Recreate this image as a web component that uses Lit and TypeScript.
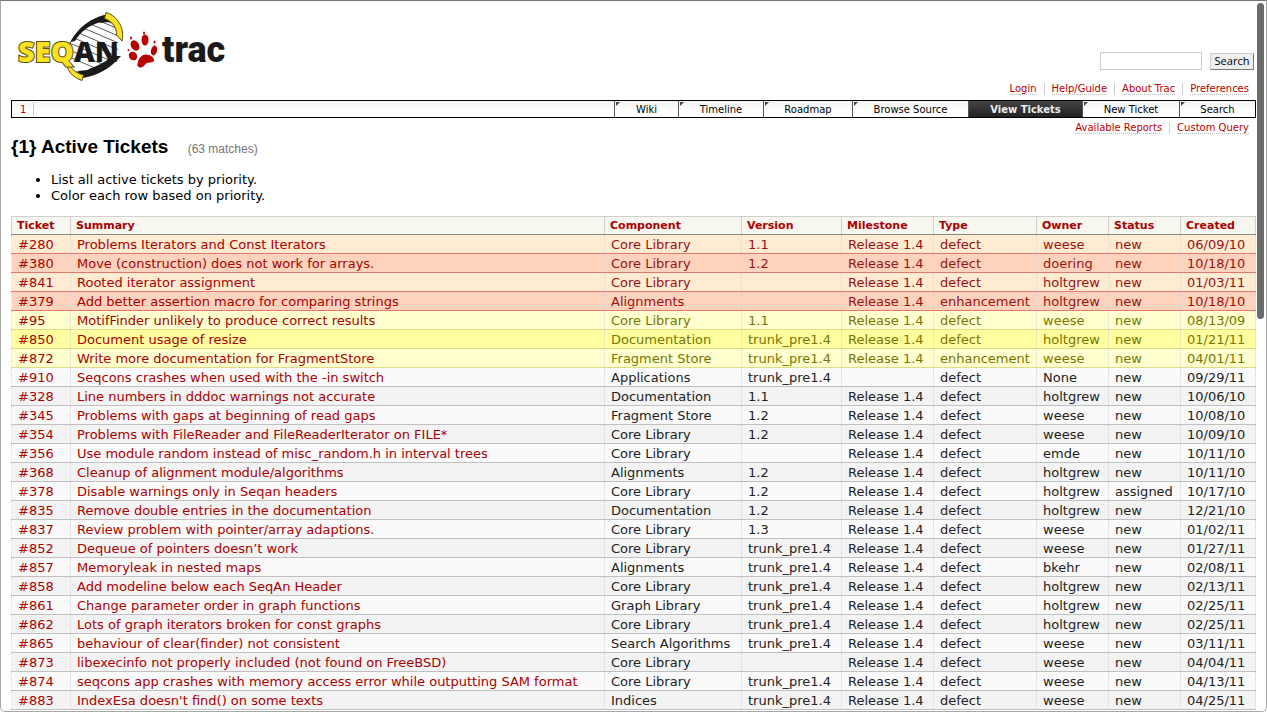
import { LitElement, html, css, svg } from "lit";
import { customElement } from "lit/decorators.js";

type Ticket = [number, string, string, string, string, string, string, string, string, string];

const R = "Release 1.4";
const T = "trunk_pre1.4";
const tickets: Ticket[] = [
  [280, "Problems Iterators and Const Iterators", "Core Library", "1.1", R, "defect", "weese", "new", "06/09/10", "p2"],
  [380, "Move (construction) does not work for arrays.", "Core Library", "1.2", R, "defect", "doering", "new", "10/18/10", "p2"],
  [841, "Rooted iterator assignment", "Core Library", "", R, "defect", "holtgrew", "new", "01/03/11", "p2"],
  [379, "Add better assertion macro for comparing strings", "Alignments", "", R, "enhancement", "holtgrew", "new", "10/18/10", "p2"],
  [95, "MotifFinder unlikely to produce correct results", "Core Library", "1.1", R, "defect", "weese", "new", "08/13/09", "p3"],
  [850, "Document usage of resize", "Documentation", T, R, "defect", "holtgrew", "new", "01/21/11", "p3"],
  [872, "Write more documentation for FragmentStore", "Fragment Store", T, R, "enhancement", "weese", "new", "04/01/11", "p3"],
  [910, "Seqcons crashes when used with the -in switch", "Applications", T, "", "defect", "None", "new", "09/29/11", "p4"],
  [328, "Line numbers in dddoc warnings not accurate", "Documentation", "1.1", R, "defect", "holtgrew", "new", "10/06/10", "p4"],
  [345, "Problems with gaps at beginning of read gaps", "Fragment Store", "1.2", R, "defect", "weese", "new", "10/08/10", "p4"],
  [354, "Problems with FileReader and FileReaderIterator on FILE*", "Core Library", "1.2", R, "defect", "weese", "new", "10/09/10", "p4"],
  [356, "Use module random instead of misc_random.h in interval trees", "Core Library", "", R, "defect", "emde", "new", "10/11/10", "p4"],
  [368, "Cleanup of alignment module/algorithms", "Alignments", "1.2", R, "defect", "holtgrew", "new", "10/11/10", "p4"],
  [378, "Disable warnings only in Seqan headers", "Core Library", "1.2", R, "defect", "holtgrew", "assigned", "10/17/10", "p4"],
  [835, "Remove double entries in the documentation", "Documentation", "1.2", R, "defect", "holtgrew", "new", "12/21/10", "p4"],
  [837, "Review problem with pointer/array adaptions.", "Core Library", "1.3", R, "defect", "weese", "new", "01/02/11", "p4"],
  [852, "Dequeue of pointers doesn’t work", "Core Library", T, R, "defect", "weese", "new", "01/27/11", "p4"],
  [857, "Memoryleak in nested maps", "Alignments", T, R, "defect", "bkehr", "new", "02/08/11", "p4"],
  [858, "Add modeline below each SeqAn Header", "Core Library", T, R, "defect", "holtgrew", "new", "02/13/11", "p4"],
  [861, "Change parameter order in graph functions", "Graph Library", T, R, "defect", "holtgrew", "new", "02/25/11", "p4"],
  [862, "Lots of graph iterators broken for const graphs", "Core Library", T, R, "defect", "holtgrew", "new", "02/25/11", "p4"],
  [865, "behaviour of clear(finder) not consistent", "Search Algorithms", T, R, "defect", "weese", "new", "03/11/11", "p4"],
  [873, "libexecinfo not properly included (not found on FreeBSD)", "Core Library", "", R, "defect", "weese", "new", "04/04/11", "p4"],
  [874, "seqcons app crashes with memory access error while outputting SAM format", "Core Library", T, R, "defect", "weese", "new", "04/13/11", "p4"],
  [883, "IndexEsa doesn't find() on some texts", "Indices", T, R, "defect", "weese", "new", "04/25/11", "p4"],
];

const columns = ["Ticket", "Summary", "Component", "Version", "Milestone", "Type", "Owner", "Status", "Created"];
const tabs = ["Wiki", "Timeline", "Roadmap", "Browse Source", "View Tickets", "New Ticket", "Search"];

const logo = svg`
  <clipPath id="helix"><path d="M67 62 C66 50 70 38 82 28 C92 20 100 17 108 18 C118 26 120 42 117 55 C108 66 98 72 85 76 C76 74 68 70 67 62Z"/></clipPath>
  <path d="M67 62 C66 50 70 38 82 28" fill="none" stroke="#444" stroke-width="1"/>
  <g clip-path="url(#helix)" stroke="#333" stroke-width="0.800" fill="none">
    <path d="M60 4l70 30M60 11l70 30M60 18l70 30M60 25l70 30M60 32l70 30M60 39l70 30M60 46l70 30M60 53l70 30"/>
  </g>
  <path d="M71 42 C77 28 92 17 107 14.500 L114 24 C106 20 104 24 99 22.500 C90 25 80 32 75 41Z" fill="#1a1a1a"/>
  <path d="M76 72 C82 69 86 72 90 68.500 C100 65 107 61 112 56 L121 56 C110 69 98 75 83 78Z" fill="#1a1a1a"/>
  <path d="M106 12.500 C118 16 125 29 122 41 L116.500 35 C117 28 112 21 104.500 18.500Z" fill="#fbe122" stroke="#554c12" stroke-width="1"/>
  <path d="M67 60 C70 69 76 73 83.500 75 L82 80.500 C72 77 67 71 66 61Z" fill="#fbe122" stroke="#554c12" stroke-width="1"/>
  <text class="seqan" x="18" y="61.500" font-size="29" fill="#1a1a1a"><tspan class="seq">SEQ</tspan>AN</text>
  <g fill="#b70000">
    <ellipse cx="145" cy="40" rx="3.500" ry="5.500"/><ellipse cx="135" cy="45.500" rx="4" ry="5.500" transform="rotate(-30 135 45.500)"/>
    <ellipse cx="154" cy="50.500" rx="3" ry="5" transform="rotate(15 154 50.500)"/><ellipse cx="133" cy="56" rx="4" ry="4.500" transform="rotate(-40 133 56)"/>
    <path d="M137.500 64c1-6 4-9 8-9.500 5 0 8.500 3 8.500 5.500 0 3-4 2-7 3-3 2-3 4-6 4.500-3 0-4-2-3.500-3.500z"/>
    <ellipse cx="144" cy="33" rx="1" ry="1.500"/><ellipse cx="131" cy="38" rx="1" ry="1.500"/><ellipse cx="154.500" cy="42" rx="1" ry="1.500"/><circle cx="128.500" cy="50" r="1"/>
  </g>
  <text class="trac" x="162" y="61.500" font-size="36" fill="#1a1a1a">trac</text>`;

@customElement("app-root")
export class AppRoot extends LitElement {
  static styles = css`
    :host { display: block; height: 100vh; overflow: hidden; box-sizing: border-box; position: relative; border: 1px solid #a6a6a6; border-top-color: #777; border-radius: 0 0 5px 5px; background: #fff; color: #000; font: 13px/16px Verdana, "DejaVu Sans", sans-serif; padding: 0 10px; }
    a { color: #b00; text-decoration: none; }
    .head { display: flex; justify-content: space-between; align-items: flex-end; height: 79px; }
    .logo { width: 220px; height: 84px; align-self: flex-start; font-family: "Open Sans", sans-serif; }
    .seqan { font-weight: 800; }
    .seq { fill: #fbe122; stroke: #554c12; stroke-width: 2px; paint-order: stroke; }
    .trac { font-family: Roboto, sans-serif; font-weight: 900; }
    .find { display: flex; gap: 8px; margin: 0 2px 10px 0; align-items: center; }
    .find input { box-sizing: border-box; width: 102px; height: 18px; border: 1px solid #ccc; padding: 0 2px; }
    .find button { box-sizing: border-box; height: 17px; width: 44px; padding: 0; border: 1px solid #aaa; border-color: #ccc #777 #777 #ccc; background: #eee; font: 11px/14px "Open Sans", sans-serif; color: #000; }
    .links { display: flex; justify-content: flex-end; font-size: 10px; line-height: 12px; padding-right: 7px; }
    .links a { border-bottom: 1px dotted #bbb; }
    .links span + span { border-left: 1px solid #ccc; margin-left: 7px; padding-left: 7px; }
    .meta { margin: 3px 0 5px; }
    .nav { display: flex; border: 1px solid #000; height: 16px; font-size: 10px; line-height: 17px; background: linear-gradient(#f2f2f2, #fff 60%); }
    .path { flex: 1; }
    .path a { display: inline-block; line-height: 12px; padding: 2px 7px 0 8px; border-right: 1px solid #ccc; }
    .tab { color: #000; box-sizing: border-box; border-left: 1px solid #555; text-align: center; position: relative; }
    .tab::before { content: ""; position: absolute; left: 1px; top: 1px; border-top: 4px solid #444; border-right: 4px solid transparent; }
    .t0 { width: 64px; } .t1 { width: 85px; } .t2 { width: 89px; } .t3 { width: 116px; } .t4 { width: 114px; } .t5 { width: 97px; } .t6 { width: 76px; }
    .t4 { background: linear-gradient(#444, #222); color: #eee; font-weight: bold; }
    .t4::before { display: none; }
    .ctx { margin-top: 4px; }
    h1 { font: bold 19px/24px "Liberation Sans", Arial, sans-serif; margin: 1px 0 11px; }
    h1 span { font-size: 12px; font-weight: normal; color: #777; margin-left: 14px; }
    ul { margin: 0 0 12px; padding-left: 40px; }
    table { width: 100%; table-layout: fixed; border-collapse: collapse; }
    th { font-size: 11px; line-height: 14px; padding: 2px 5px 1px; text-align: left; background: #f7f7f0; border: 1px solid #d0d0d0; border-bottom-color: #888; white-space: nowrap; }
    td { height: 17px; line-height: 17px; padding: 1px 6px 0; border: 1px dotted #d7d7d7; border-top: 0; border-bottom: 1px solid #ccc; white-space: nowrap; color: #222; }
    .c0 { width: 59px; } .c2 { width: 137px; } .c3 { width: 100px; } .c4 { width: 92px; } .c5 { width: 103px; } .c6, .c7 { width: 72px; } .c8 { width: 75px; }
    .p2 td { background: #ffebd2; border-bottom-color: #e4776f; color: #911; }
    .p2.even td { background: #fed3bd; }
    .p3 td { background: #ffffd0; border-bottom-color: #dd8; color: #770; }
    .p3.even td { background: #ffff9f; }
    .p4 td { background: #f3f3f3; border-bottom-color: #c0c0c0; }
    .p4.even td { background: #fafafa; }
    td a, .p2 td a, th a { color: #a00; }
    .bar { position: absolute; right: 2px; top: 2px; width: 7px; height: 316px; background: #6b6b6b; border-radius: 4px; }
  `;

  render() {
    const links = (items: string[]) => items.map((t) => html`<span><a href="#">${t}</a></span>`);
    return html`
      <div class="head">
        <svg class="logo" viewBox="11 1 220 84" role="img" aria-label="SeqAn trac">${logo}</svg>
        <form class="find"><input type="text" aria-label="Search text" /><button type="button">Search</button></form>
      </div>
      <div class="links meta">${links(["Login", "Help/Guide", "About Trac", "Preferences"])}</div>
      <nav class="nav">
        <div class="path"><a href="#">1</a></div>
        ${tabs.map((t, i) => html`<a href="#" class="tab t${i}">${t}</a>`)}
      </nav>
      <div class="links ctx">${links(["Available Reports", "Custom Query"])}</div>
      <h1>{1} Active Tickets <span>(63 matches)</span></h1>
      <ul><li>List all active tickets by priority.</li><li>Color each row based on priority.</li></ul>
      <table>
        <colgroup>${columns.map((_, i) => html`<col class="c${i}" />`)}</colgroup>
        <thead><tr>${columns.map((c) => html`<th scope="col"><a href="#">${c}</a></th>`)}</tr></thead>
        <tbody>${tickets.map((t, i) => html`<tr class="${t[9]} ${i % 2 ? "even" : "odd"}">
          <td><a href="#">#${t[0]}</a></td><td><a href="#">${t[1]}</a></td>${t.slice(2, 9).map((v) => html`<td>${v}</td>`)}
        </tr>`)}</tbody>
      </table>
      <div class="bar"></div>`;
  }
}
